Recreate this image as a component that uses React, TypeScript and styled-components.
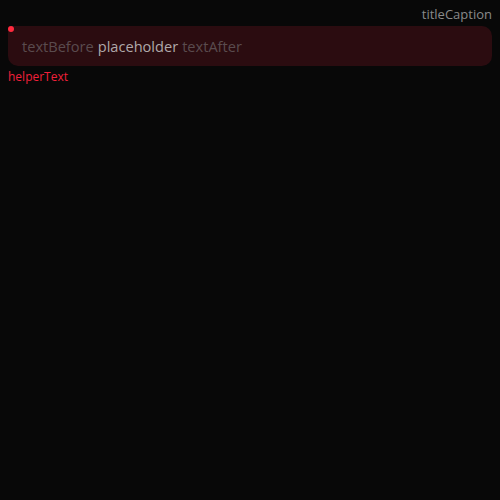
import React from "react";
import styled, { createGlobalStyle } from "styled-components";

const Global = createGlobalStyle`
  html, body { margin: 0; padding: 0; background: #080808; }
  body { font-family: "Open Sans", "Noto Sans", sans-serif; }
`;

const Page = styled.div`
  width: 500px;
  height: 500px;
  box-sizing: border-box;
  padding: 6px 8px;
  background: #080808;
  display: flex;
  flex-direction: column;
`;

const Caption = styled.div`
  align-self: flex-end;
  font-size: 13px;
  line-height: 16px;
  color: #8a8a8a;
  margin-bottom: 4px;
`;

const FieldWrap = styled.div`
  position: relative;
`;

const Field = styled.div`
  height: 40px;
  background: #2b0c10;
  border-radius: 4px 10px 10px 10px;
  display: flex;
  align-items: center;
  padding: 0 14px;
  font-size: 14.6px;
  gap: 4px;
`;

const Dot = styled.span`
  position: absolute;
  left: 0;
  top: 0;
  width: 6px;
  height: 6px;
  border-radius: 50%;
  background: #ff2a3e;
`;

const Affix = styled.span`
  color: #5a4b4e;
`;

const Placeholder = styled.span`
  color: #b0a9aa;
`;

const Helper = styled.div`
  margin-top: 3px;
  font-size: 12px;
  line-height: 15px;
  color: #f2203a;
`;

export default function App() {
  return (
    <>
      <Global />
      <Page>
        <Caption>titleCaption</Caption>
        <FieldWrap>
          <Field>
            <Affix>textBefore</Affix>
            <Placeholder>placeholder</Placeholder>
            <Affix>textAfter</Affix>
          </Field>
          <Dot />
        </FieldWrap>
        <Helper>helperText</Helper>
      </Page>
    </>
  );
}
